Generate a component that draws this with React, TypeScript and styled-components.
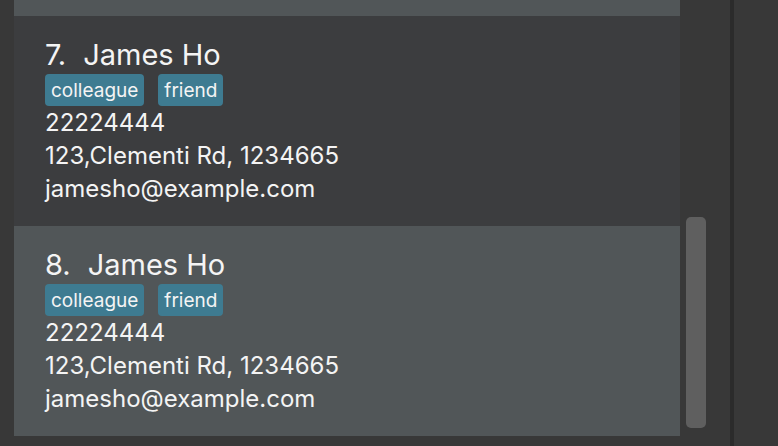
import React from "react";
import styled, { createGlobalStyle } from "styled-components";

const Global = createGlobalStyle`
  html, body { margin: 0; padding: 0; background: #383838; }
  body { font-family: "Inter", "Liberation Sans", sans-serif; }
  #root { width: 778px; height: 446px; }
`;

const Window = styled.div`
  display: flex;
  width: 778px;
  height: 446px;
  background: #383838;
  overflow: hidden;
`;

const ListPane = styled.div`
  display: flex;
  width: 730px;
  height: 446px;
  padding: 0 0 10px 14px;
  box-sizing: border-box;
`;

const List = styled.div`
  flex: 0 0 666px;
  display: flex;
  flex-direction: column;
  overflow: hidden;
`;

const CardStub = styled.div`
  height: 16px;
  flex: 0 0 16px;
  background: #515658;
`;

const Card = styled.div<{ $odd: boolean }>`
  display: flex;
  flex-direction: column;
  height: 210px;
  flex: 0 0 210px;
  box-sizing: border-box;
  padding: 21px 0 0 31px;
  background: ${(p) => (p.$odd ? "#515658" : "#3c3d3f")};
  color: #f4f4f4;
`;

const NameRow = styled.div`
  display: flex;
  gap: 17px;
  font-size: 29px;
  line-height: 36px;
  height: 36px;
  margin-bottom: 1px;
`;

const Tags = styled.div`
  display: flex;
  gap: 14px;
  height: 32px;
`;

const Tag = styled.span`
  display: flex;
  align-items: center;
  height: 32px;
  padding: 0 6px;
  border-radius: 4px;
  background: #3e7b91;
  font-size: 19px;
`;

const Line = styled.div`
  font-size: 24px;
  line-height: 33px;
  height: 33px;
`;

const Track = styled.div`
  flex: 1;
  display: flex;
  justify-content: flex-start;
  padding: 217px 0 0 6px;
`;

const Thumb = styled.div`
  width: 20px;
  height: 211px;
  border-radius: 5px;
  background: #5f5f5f;
`;

const Divider = styled.div`
  width: 4px;
  height: 446px;
  background: #2b2b2b;
`;

const Side = styled.div`
  flex: 1;
  background: #383838;
`;

type Person = { id: number; name: string; tags: string[]; phone: string; address: string; email: string };

const people: Person[] = [7, 8].map((id) => ({
  id,
  name: "James Ho",
  tags: ["colleague", "friend"],
  phone: "22224444",
  address: "123,Clementi Rd, 1234665",
  email: "jamesho@example.com",
}));

export default function App() {
  return (
    <>
      <Global />
      <Window>
        <ListPane>
          <List>
            <CardStub />
            {people.map((p, i) => (
              <Card key={p.id} $odd={i % 2 === 1}>
                <NameRow>
                  <span>{p.id}.</span>
                  <span>{p.name}</span>
                </NameRow>
                <Tags>
                  {p.tags.map((t) => (
                    <Tag key={t}>{t}</Tag>
                  ))}
                </Tags>
                <Line>{p.phone}</Line>
                <Line>{p.address}</Line>
                <Line>{p.email}</Line>
              </Card>
            ))}
          </List>
          <Track>
            <Thumb />
          </Track>
        </ListPane>
        <Divider />
        <Side />
      </Window>
    </>
  );
}
